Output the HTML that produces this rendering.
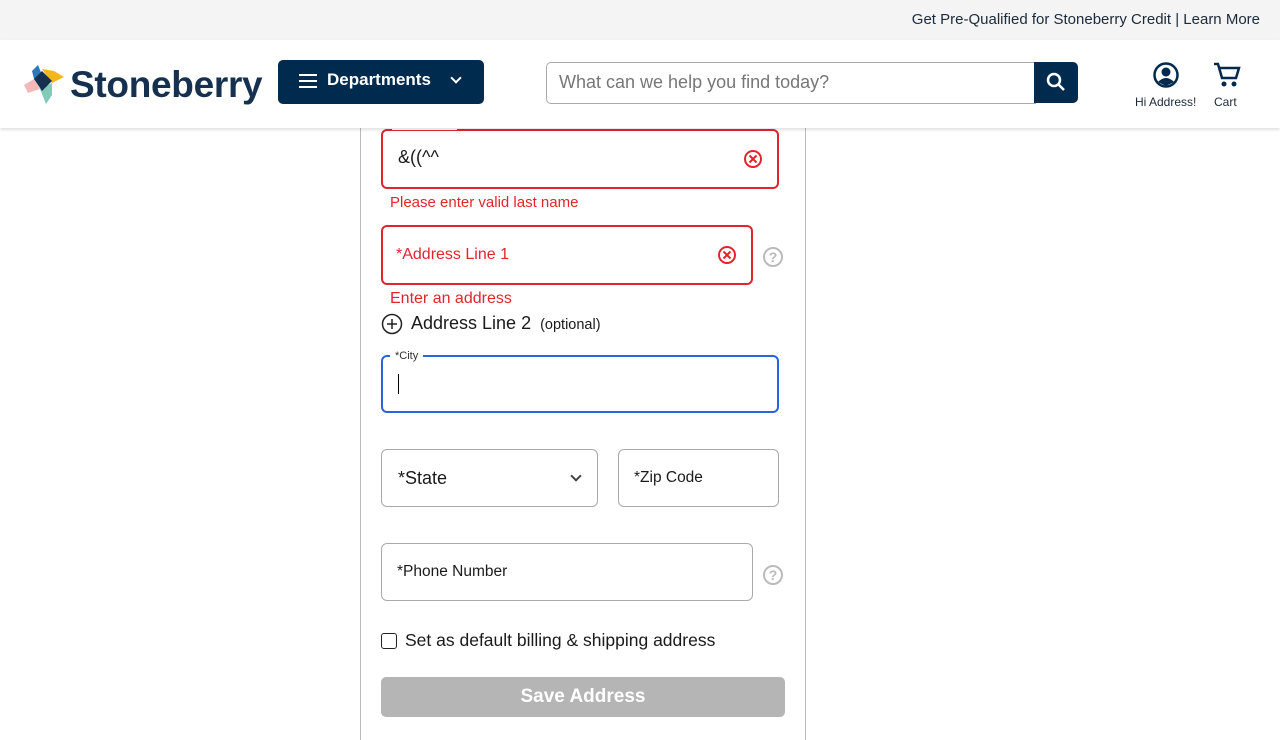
<!DOCTYPE html>
<html><head><style>
*{box-sizing:border-box;margin:0;padding:0}
body{width:1280px;height:720px;overflow:hidden;background:#fff;font-family:"Liberation Sans",sans-serif;color:#1a1a1a;position:relative}
.abs{position:absolute}
.top{left:0;top:0;width:1280px;height:40px;background:#f4f4f4;font-size:15px;color:#1b2a3a;text-align:right;padding:11px 20px 0 0}
.hdr{left:0;top:40px;width:1280px;height:88px;background:#fff;box-shadow:0 2px 3px rgba(0,0,0,.12);z-index:5}
.panel{left:360px;top:120px;width:446px;height:620px;border-left:1px solid #bbb;border-right:1px solid #bbb}
.field{border:1px solid #aaa;border-radius:6px;background:#fff}
.err{border:2px solid #e1252d}
.etext{color:#e1252d;font-size:15px}
.q{width:20px;height:20px;border:2px solid #bbb;border-radius:50%;color:#bbb;font-size:14px;font-weight:bold;text-align:center;line-height:16px}
</style></head><body>
<div class="abs top">Get Pre-Qualified for Stoneberry Credit | Learn More</div>
<div class="abs hdr">
 <svg class="abs" style="left:24px;top:23px" width="44" height="42" viewBox="0 0 44 42">
  <polygon points="8,8 14,2 18,12 10,16" fill="#2d77bb"/>
  <polygon points="18,6 30,8 40,14 28,20" fill="#f2b71c"/>
  <polygon points="0,22 10,16 16,26 4,30" fill="#f4b8b8"/>
  <polygon points="16,26 28,20 28,32 22,41" fill="#7fcbb8"/>
  <polygon points="10,16 18,8 28,18 18,28" fill="#16304f"/>
 </svg>
 <div class="abs" style="left:70px;top:24px;font-size:37px;font-weight:bold;color:#16304f;letter-spacing:-0.3px">Stoneberry</div>
 <div class="abs" style="left:278px;top:20px;width:206px;height:44px;background:#002b4e;border-radius:5px;color:#fff;font-weight:bold;font-size:17px">
  <div class="abs" style="left:21px;top:14px;width:18px;height:2px;background:#fff;box-shadow:0 6px 0 #fff,0 12px 0 #fff"></div>
  <div class="abs" style="left:49px;top:10px">Departments</div>
  <div class="abs" style="left:174px;top:14px;width:8px;height:8px;border-right:2px solid #fff;border-bottom:2px solid #fff;transform:rotate(45deg)"></div>
 </div>
 <div class="abs" style="left:546px;top:22px;width:490px;height:42px;border:1px solid #aaa;border-radius:5px 0 0 5px;color:#777;font-size:18px;padding:9px 12px">What can we help you find today?</div>
 <div class="abs" style="left:1034px;top:22px;width:44px;height:41px;background:#002b4e;border-radius:0 5px 5px 0">
  <svg width="44" height="41"><circle cx="20" cy="18" r="6" stroke="#fff" stroke-width="2.5" fill="none"/><line x1="24.5" y1="22.5" x2="30" y2="28" stroke="#fff" stroke-width="2.5"/></svg>
 </div>
 <svg class="abs" style="left:1152px;top:21px" width="28" height="28"><circle cx="14" cy="14" r="11.5" stroke="#002b4e" stroke-width="2.5" fill="none"/><circle cx="14" cy="11" r="4.5" fill="#002b4e"/><path d="M6 21 Q14 13 22 21 L14 25Z" fill="#002b4e"/></svg>
 <div class="abs" style="left:1135px;top:55px;font-size:12px;color:#1b2a3a">Hi Address!</div>
 <svg class="abs" style="left:1212px;top:20px" width="30" height="30"><path d="M2 4h4l4 14h14l3-10H8" stroke="#002b4e" stroke-width="2.5" fill="none"/><circle cx="12" cy="24" r="2.5" fill="#002b4e"/><circle cx="22" cy="24" r="2.5" fill="#002b4e"/></svg>
 <div class="abs" style="left:1214px;top:55px;font-size:12px;color:#1b2a3a">Cart</div>
</div>
<div class="abs panel"></div>
<div class="abs field err" style="left:381px;top:129px;width:398px;height:60px"></div>
<div class="abs" style="left:398px;top:147px;font-size:18px">&amp;((^^</div>
<svg class="abs" style="left:743px;top:149px" width="20" height="20"><circle cx="10" cy="10" r="8" stroke="#e1252d" stroke-width="2" fill="none"/><path d="M6.5 6.5l7 7M13.5 6.5l-7 7" stroke="#e1252d" stroke-width="2"/></svg>
<div class="abs etext" style="left:390px;top:194px">Please enter valid last name</div>
<div class="abs field err" style="left:381px;top:225px;width:372px;height:60px"></div>
<div class="abs etext" style="left:396px;top:246px;font-size:16px">*Address Line 1</div>
<svg class="abs" style="left:717px;top:245px" width="20" height="20"><circle cx="10" cy="10" r="8" stroke="#e1252d" stroke-width="2" fill="none"/><path d="M6.5 6.5l7 7M13.5 6.5l-7 7" stroke="#e1252d" stroke-width="2"/></svg>
<div class="abs q" style="left:763px;top:247px">?</div>
<div class="abs etext" style="left:390px;top:290px;font-size:16px">Enter an address</div>
<svg class="abs" style="left:381px;top:313px" width="22" height="22"><circle cx="11" cy="11" r="9.5" stroke="#222" stroke-width="1.5" fill="none"/><path d="M11 6v10M6 11h10" stroke="#222" stroke-width="1.5"/></svg>
<div class="abs" style="left:411px;top:313px;font-size:18px">Address Line 2 <span style="font-size:14.5px;margin-left:4px">(optional)</span></div>
<div class="abs field" style="left:381px;top:355px;width:398px;height:58px;border:2px solid #2a63e0"></div>
<div class="abs" style="left:390px;top:350px;background:#fff;padding:0 5px;font-size:11px;color:#333">*City</div>
<div class="abs" style="left:398px;top:374px;width:1px;height:20px;background:#000"></div>
<div class="abs field" style="left:381px;top:449px;width:217px;height:58px"></div>
<div class="abs" style="left:398px;top:468px;font-size:18px">*State</div>
<div class="abs" style="left:572px;top:472px;width:8px;height:8px;border-right:2px solid #444;border-bottom:2px solid #444;transform:rotate(45deg)"></div>
<div class="abs field" style="left:618px;top:449px;width:161px;height:58px"></div>
<div class="abs" style="left:634px;top:469px;font-size:15.5px">*Zip Code</div>
<div class="abs field" style="left:381px;top:543px;width:372px;height:58px"></div>
<div class="abs" style="left:397px;top:563px;font-size:15.5px">*Phone Number</div>
<div class="abs q" style="left:763px;top:565px">?</div>
<div class="abs" style="left:381px;top:633px;width:16px;height:16px;border:1.5px solid #222;border-radius:3px"></div>
<div class="abs" style="left:405px;top:630px;font-size:17.5px">Set as default billing &amp; shipping address</div>
<div class="abs" style="left:381px;top:677px;width:404px;height:40px;background:#b5b5b5;border-radius:5px;color:#fff;font-weight:bold;font-size:19px;text-align:center;line-height:40px">Save Address</div>
<div class="abs" style="left:392px;top:118px;background:#fff;padding:0 6px;font-size:11px;color:#e1252d;z-index:2">Last Name</div>
</body></html>
